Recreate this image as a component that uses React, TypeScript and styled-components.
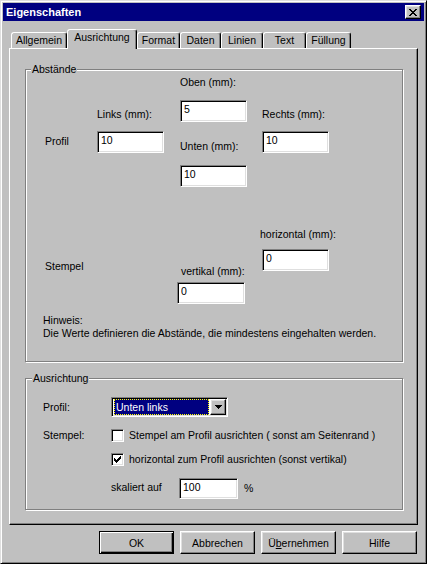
import * as React from 'react'
import styled, { createGlobalStyle, css } from 'styled-components'

const GlobalStyle = createGlobalStyle`
  html, body {
    margin: 0;
    padding: 0;
    background: #c0c0c0;
  }
  body {
    font-family: "Liberation Sans", Arial, sans-serif;
    font-size: 10.5px;
    color: #000;
  }
  * {
    box-sizing: border-box;
  }
`

const raised = css`
  border: 1px solid;
  border-color: #fff #000 #000 #fff;
  box-shadow: inset -1px -1px 0 #808080, inset 1px 1px 0 #dfdfdf;
`

const sunken = css`
  border: 1px solid;
  border-color: #808080 #fff #fff #808080;
  box-shadow: inset 1px 1px 0 #000, inset -1px -1px 0 #dfdfdf;
`

const Window = styled.div`
  width: 427px;
  height: 564px;
  background: #c0c0c0;
  border: 1px solid;
  border-color: #dfdfdf #000 #000 #dfdfdf;
  box-shadow: inset 1px 1px 0 #fff, inset -1px -1px 0 #808080;
  padding: 2px;
  display: flex;
  flex-direction: column;
`

const TitleBar = styled.div`
  height: 18px;
  background: #000080;
  display: flex;
  align-items: center;
  justify-content: space-between;
  padding: 0 3px 0 3px;
`

const Title = styled.span`
  color: #fff;
  font-weight: bold;
  font-size: 11px;
  line-height: 13px;
`

const CloseButton = styled.div`
  width: 16px;
  height: 14px;
  background: #c0c0c0;
  ${raised};
  display: flex;
  align-items: center;
  justify-content: center;
`

const Body = styled.div`
  flex: 1;
  padding: 8px 6px 0 6px;
  display: flex;
  flex-direction: column;
`

const TabStrip = styled.div`
  height: 19px;
  display: flex;
  align-items: flex-end;
  padding-left: 2px;
  position: relative;
  z-index: 1;
`

const Tab = styled.div<{ $w: number; $active?: boolean }>`
  width: ${p => p.$w}px;
  height: ${p => (p.$active ? 20 : 16)}px;
  margin-bottom: ${p => (p.$active ? -1 : 0)}px;
  padding-top: 1px;
  background: #c0c0c0;
  border: 1px solid;
  border-bottom: none;
  border-color: #fff #000 transparent #fff;
  border-radius: 3px 3px 0 0;
  box-shadow: inset -1px 0 0 #808080;
  text-align: center;
  line-height: 13px;
  white-space: nowrap;
  position: relative;
  z-index: ${p => (p.$active ? 2 : 1)};
`

const Panel = styled.div`
  height: 477px;
  border: 1px solid;
  border-color: #fff #000 #000 #fff;
  box-shadow: inset -1px -1px 0 #808080;
  padding: 20px 0 0 15px;
  display: flex;
  flex-direction: column;
`

const GroupBox = styled.div<{ $h: number; $top?: number }>`
  position: relative;
  width: 378px;
  height: ${p => p.$h}px;
  margin-top: ${p => p.$top ?? 0}px;
  border: 1px solid #808080;
  box-shadow: inset 1px 1px 0 #fff, 1px 1px 0 #fff;
`

const Legend = styled.span<{ $left?: number }>`
  position: absolute;
  top: -7px;
  left: ${p => p.$left ?? 5}px;
  padding: 0 1px;
  background: #c0c0c0;
  line-height: 13px;
`

const Section = styled.div<{ $cols: string; $top: number }>`
  display: grid;
  grid-template-columns: ${p => p.$cols};
  align-items: start;
  margin-top: ${p => p.$top}px;
  padding-left: 19px;
`

const Column = styled.div<{ $top?: number; $left?: number }>`
  display: flex;
  flex-direction: column;
  align-items: flex-start;
  margin-top: ${p => p.$top ?? 0}px;
  margin-left: ${p => p.$left ?? 0}px;
`

const Label = styled.span<{ $top?: number; $left?: number; $w?: number }>`
  display: block;
  line-height: 13px;
  white-space: nowrap;
  margin-top: ${p => p.$top ?? 0}px;
  margin-left: ${p => p.$left ?? 0}px;
  ${p => (p.$w ? `width: ${p.$w}px;` : '')}
`

const Field = styled.input<{ $w: number; $h?: number; $top?: number; $left?: number }>`
  display: block;
  width: ${p => p.$w}px;
  height: ${p => p.$h ?? 22}px;
  margin: ${p => p.$top ?? 0}px 0 0 ${p => p.$left ?? 0}px;
  padding: 0 2px 4px 3px;
  ${sunken};
  background: #fff;
  font: inherit;
  color: #000;
  outline: none;
`

const Note = styled.div`
  margin-top: 10px;
  padding-left: 17px;
  line-height: 13px;
`

const OptionGrid = styled.div`
  display: flex;
  flex-direction: column;
  padding: 18px 0 0 17px;
`

const OptionRow = styled.div<{ $top?: number }>`
  display: grid;
  grid-template-columns: 68px 1fr;
  align-items: center;
  margin-top: ${p => p.$top ?? 0}px;
`

const Inline = styled.div<{ $gap?: number }>`
  display: flex;
  align-items: center;
  gap: ${p => p.$gap ?? 5}px;
  line-height: 13px;
  white-space: nowrap;
`

const Combo = styled.div`
  width: 117px;
  height: 20px;
  display: flex;
  gap: 1px;
  padding: 1px 1px 1px 2px;
  ${sunken};
  background: #fff;
`

const ComboValue = styled.div`
  flex: 1;
  background: #000080;
  color: #fff;
  outline: 1px dotted #ffff00;
  outline-offset: -1px;
  padding-left: 2px;
  line-height: 16px;
`

const ComboArrow = styled.div`
  width: 16px;
  background: #c0c0c0;
  ${raised};
  display: flex;
  align-items: center;
  justify-content: center;
`

const CheckBox = styled.span`
  width: 13px;
  height: 13px;
  flex: none;
  ${sunken};
  background: #fff;
  display: flex;
  align-items: center;
  justify-content: center;
`

const ButtonRow = styled.div`
  display: flex;
  justify-content: flex-end;
  gap: 6px;
  margin-top: 6px;
  padding-right: 1px;
`

const Button = styled.button<{ $default?: boolean }>`
  width: 75px;
  height: 23px;
  padding: 0;
  background: #c0c0c0;
  font: inherit;
  color: #000;
  ${p =>
    p.$default
      ? css`
          border: 1px solid #000;
          box-shadow: inset 1px 1px 0 #fff, inset -1px -1px 0 #000, inset -2px -2px 0 #808080;
        `
      : raised};
`

const Accel = styled.span`
  text-decoration: underline;
`

// tiny bitmap glyphs, one string per pixel row
const Pixels = ({ rows, color = '#000' }: { rows: string[]; color?: string }) => (
  <svg width={rows[0].length} height={rows.length} shapeRendering="crispEdges">
    {rows.flatMap((r, y) =>
      r.split('').map((c, x) => (c === 'X' ? <rect key={`${x}-${y}`} x={x} y={y} width={1} height={1} fill={color} /> : null))
    )}
  </svg>
)

const closeGlyph = ['XX....XX', '.XX..XX.', '..XXXX..', '...XX...', '..XXXX..', '.XX..XX.', 'XX....XX']
const checkGlyph = ['......X', '.....XX', 'X...XXX', 'XX.XXX.', 'XXXXX..', '.XXX...', '..X....']
const arrowGlyph = ['XXXXXXX', '.XXXXX.', '..XXX..', '...X...']

const tabs = [
  { label: 'Allgemein', width: 56 },
  { label: 'Ausrichtung', width: 70, active: true },
  { label: 'Format', width: 43 },
  { label: 'Daten', width: 41 },
  { label: 'Linien', width: 42 },
  { label: 'Text', width: 43 },
  { label: 'Füllung', width: 45 },
]

export default function App() {
  return (
    <>
      <GlobalStyle />
      <Window>
        <TitleBar>
          <Title>Eigenschaften</Title>
          <CloseButton>
            <Pixels rows={closeGlyph} />
          </CloseButton>
        </TitleBar>
        <Body>
          <TabStrip>
            {tabs.map(t => (
              <Tab key={t.label} $w={t.width} $active={t.active}>
                {t.label}
              </Tab>
            ))}
          </TabStrip>
          <Panel>
            <GroupBox $h={293}>
              <Legend>Abstände</Legend>
              <Section $cols="52px 83px 82px 1fr" $top={6}>
                <Column $top={59}>
                  <Label>Profil</Label>
                </Column>
                <Column $top={32}>
                  <Label>Links (mm):</Label>
                  <Field $w={67} $top={10} readOnly value="10" />
                </Column>
                <Column>
                  <Label>Oben (mm):</Label>
                  <Field $w={67} $top={11} readOnly value="5" />
                  <Label $top={18}>Unten (mm):</Label>
                  <Field $w={67} $top={12} readOnly value="10" />
                </Column>
                <Column $top={32}>
                  <Label>Rechts (mm):</Label>
                  <Field $w={67} $top={10} readOnly value="10" />
                </Column>
              </Section>
              <Section $cols="52px 80px 83px 1fr" $top={41}>
                <Column $top={32}>
                  <Label>Stempel</Label>
                </Column>
                <Column />
                <Column $top={37}>
                  <Label $left={4}>vertikal (mm):</Label>
                  <Field $w={68} $top={4} readOnly value="0" />
                </Column>
                <Column>
                  <Label>horizontal (mm):</Label>
                  <Field $w={67} $top={8} $left={2} readOnly value="0" />
                </Column>
              </Section>
              <Note>
                Hinweis:
                <br />
                Die Werte definieren die Abstände, die mindestens eingehalten werden.
              </Note>
            </GroupBox>
            <GroupBox $h={132} $top={16}>
              <Legend $left={6}>Ausrichtung</Legend>
              <OptionGrid>
                <OptionRow>
                  <Label>Profil:</Label>
                  <Combo>
                    <ComboValue>Unten links</ComboValue>
                    <ComboArrow>
                      <Pixels rows={arrowGlyph} />
                    </ComboArrow>
                  </Combo>
                </OptionRow>
                <OptionRow $top={12}>
                  <Label>Stempel:</Label>
                  <Inline>
                    <CheckBox />
                    Stempel am Profil ausrichten ( sonst am Seitenrand )
                  </Inline>
                </OptionRow>
                <OptionRow $top={11}>
                  <span />
                  <Inline>
                    <CheckBox>
                      <Pixels rows={checkGlyph} />
                    </CheckBox>
                    horizontal zum Profil ausrichten (sonst vertikal)
                  </Inline>
                </OptionRow>
                <OptionRow $top={12}>
                  <span />
                  <Inline $gap={0}>
                    <Label $w={68} $top={-2}>skaliert auf</Label>
                    <Field $w={59} $h={21} readOnly value="100" />
                    <Label $left={6}>%</Label>
                  </Inline>
                </OptionRow>
              </OptionGrid>
            </GroupBox>
          </Panel>
          <ButtonRow>
            <Button $default>OK</Button>
            <Button>Abbrechen</Button>
            <Button>
              Ü<Accel>b</Accel>ernehmen
            </Button>
            <Button>Hilfe</Button>
          </ButtonRow>
        </Body>
      </Window>
    </>
  )
}
